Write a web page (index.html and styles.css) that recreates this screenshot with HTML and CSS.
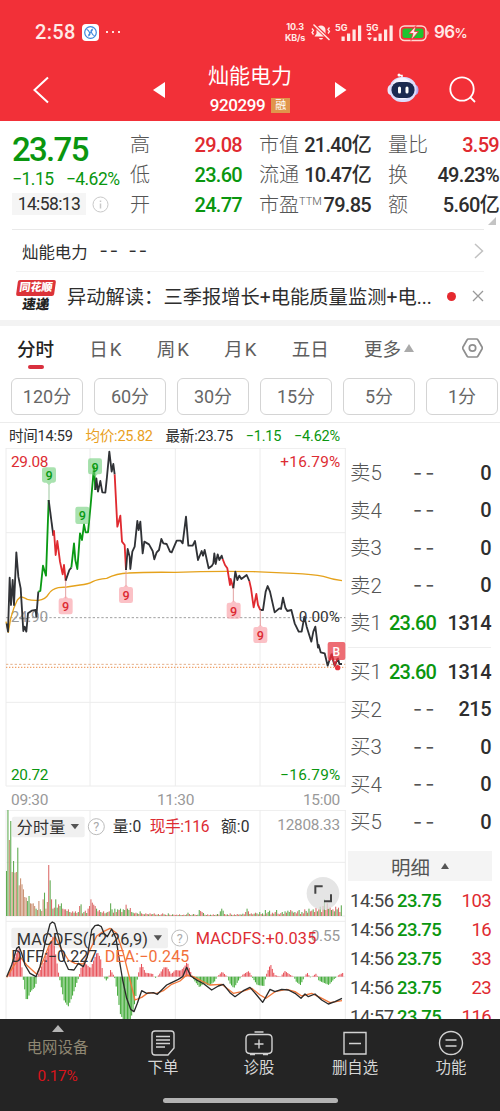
FILE: index.html
```html
<!DOCTYPE html>
<html lang="zh-CN">
<head>
<meta charset="UTF-8">
<meta name="viewport" content="width=device-width, initial-scale=1.0">
<title>灿能电力 920299</title>
<link rel="stylesheet" href="styles.css">
</head>
<body>

<header class="top">
    <div class="status">
        <span class="clock">2:58</span>
        <svg class="app-icon" width="17" height="17" viewBox="0 0 17 17"><rect width="17" height="17" rx="4" fill="#fff"/><circle cx="8.5" cy="8.5" r="5.8" fill="none" stroke="#3d86dc" stroke-width="1.2"/><path d="M4.5 5.5c2 0 2 1.500 3 3s.5 3-1.500 3.500M12.500 11.500c-2 0-2-1.500-3-3s-.5-3 1.500-3.500M10.500 6l-4 5" fill="none" stroke="#3d86dc" stroke-width="1.1"/></svg>
        <span class="dots"><i></i><i></i><i></i></span>
        <span class="speed">10.3<br>KB/s</span>
        <svg class="signals" width="120" height="20" viewBox="0 0 120 20" fill="#ffe9e6">
            <!-- muted bell -->
            <path d="M4.500 14.500l2-3V8c0-3 2-4.500 4.500-4.500s4.500 1.500 4.500 4.500v3.500l2 3zM9 16h4c-.5 2-3.500 2-4 0z"/>
            <path d="M3 2l17 16" stroke="#f23038" stroke-width="3.500"/>
            <path d="M3.500 2.500l16 15.500" stroke="#ffe9e6" stroke-width="1.500"/>
            <path d="M2 6.500l1.500 2L2 10.500l1.500 2M19.500 5.500L18 7.500l1.500 2L18 11.500" fill="none" stroke="#ffe9e6" stroke-width="1.300"/>
            <!-- sim 1 -->
            <text x="25" y="8.500" class="sig-text">5G</text>
            <path d="M31.500 14.500h3.200v4.500h-3.200zM37 11.500h3.200v7.500h-3.200zM42.500 7.500h3.200v11.500h-3.200zM48 3.500h3.200v15.500h-3.200z"/>
            <!-- sim 2 -->
            <text x="56" y="8.500" class="sig-text">5G</text>
            <path d="M57 13l2.500-3 2.500 3zM57 15.500l2.500 3 2.500-3zM63.500 15.500h3.200v3.500h-3.200zM68.500 11.500h3.200v7.500h-3.200zM74 7.500h3.200v11.500h-3.200zM79.500 3.500h3.200v15.500h-3.200z"/>
            <!-- battery -->
            <rect x="90" y="4" width="26" height="14.500" rx="4.500" fill="none" stroke="#ffd9d2" stroke-width="1.500"/>
            <rect x="92.500" y="6.500" width="21" height="9.500" rx="2.500" fill="#1ec32f"/>
            <path d="M117.500 8.500q2 2.500 0 5z"/>
            <path d="M106 3.500l-7 8h4l-2 7 7.500-9h-4z" stroke="#f23038" stroke-width=".8"/>
        </svg>
        <span class="battery">96<small>%</small></span>
    </div>
    <div class="titlebar">
        <svg class="back" width="16" height="28" viewBox="0 0 16 28"><path d="M15 1.500L1.500 14 15 26.500" fill="none" stroke="#fff" stroke-width="2"/></svg>
        <svg class="prev" width="12" height="16" viewBox="0 0 12 16"><path d="M12 0v16L0 8z" fill="#fff"/></svg>
        <div class="stock">
            <div class="stock-name">灿能电力</div>
            <div class="stock-code">920299<span class="rong">融</span></div>
        </div>
        <svg width="12" height="16" viewBox="0 0 12 16"><path d="M0 0v16l11.500-8z" fill="#fff"/></svg>
        <svg class="robot" width="32" height="30" viewBox="0 0 32 30">
            <path d="M15 5V2.500h-3" fill="none" stroke="#fff" stroke-width="1.500"/><circle cx="12" cy="2" r="1.500" fill="#fff"/>
            <ellipse cx="3.500" cy="17" rx="3" ry="5" fill="#e9eaff"/><ellipse cx="28.500" cy="17" rx="3" ry="5" fill="#b7a7ef"/>
            <rect x="2.500" y="4" width="27" height="25" rx="12" fill="#dcdcfb"/>
            <rect x="5" y="4.500" width="20" height="22" rx="10" fill="#f4f3ff"/>
            <rect x="4.500" y="9" width="23" height="16" rx="7.500" fill="#1b2950"/>
            <rect x="11" y="13.500" width="3" height="7" rx="1.500" fill="#fff"/><rect x="18.500" y="13.500" width="3" height="7" rx="1.500" fill="#fff"/>
        </svg>
        <svg class="search" width="28" height="28" viewBox="0 0 28 28" fill="none" stroke="#fff" stroke-width="1.800"><circle cx="13" cy="13" r="11.700"/><path d="M21 21l5 5"/></svg>
    </div>
</header>

<section class="quote">
    <div class="quote-main">
        <div class="price">23.75</div>
        <div class="change"><span>−1.15</span><span>−4.62%</span></div>
        <div class="stamp"><span class="time">14:58:13</span><svg width="17" height="17" viewBox="0 0 17 17" fill="none" stroke="#c9c9c9"><circle cx="8.500" cy="8.500" r="7.500"/><path d="M8.500 7.500v5M8.500 4.500v1.500" stroke-width="1.500"/></svg></div>
    </div>
    <div class="figures">
        <div><label>高</label><b class="red">29.08</b></div>
        <div><label>低</label><b class="green">23.60</b></div>
        <div><label>开</label><b class="green">24.77</b></div>
    </div>
    <div class="figures">
        <div><label>市值</label><b>21.40亿</b></div>
        <div><label>流通</label><b>10.47亿</b></div>
        <div><label>市盈<sup>TTM</sup></label><b>79.85</b></div>
    </div>
    <div class="figures">
        <div><label>量比</label><b class="red">3.59</b></div>
        <div><label>换</label><b>49.23%</b></div>
        <div><label>额</label><b>5.60亿</b></div>
    </div>
    <i class="corner"></i>
</section>

<section class="related">
    <span>灿能电力</span><span class="dash">--</span><span class="dash">--</span>
    <svg width="10" height="16" viewBox="0 0 10 16"><path d="M1 1l7.500 7L1 15" fill="none" stroke="#c2c2c2" stroke-width="1.500"/></svg>
</section>

<section class="news">
    <div class="news-logo"><span class="logo-top">同花顺</span><span class="logo-bottom">速递</span></div>
    <p>异动解读：三季报增长+电能质量监测+电...</p>
    <i class="dot"></i>
    <svg width="12" height="12" viewBox="0 0 12 12"><path d="M1 1l10 10M11 1L1 11" stroke="#999" stroke-width="1.300"/></svg>
</section>

<nav class="tabs">
    <span class="active">分时</span>
    <span class="k">日K</span>
    <span class="k">周K</span>
    <span class="k">月K</span>
    <span>五日</span>
    <span class="more">更多<i></i></span>
    <svg width="21" height="20" viewBox="0 0 21 20" fill="none" stroke="#8f8f8f" stroke-width="1.700"><path d="M6.500 1h8q1 0 1.500 1l4 7q.5 1 0 2l-4 7q-.5 1-1.500 1h-8q-1 0-1.500-1l-4-7q-.5-1 0-2l4-7q.5-1 1.500-1z"/><circle cx="10.500" cy="10" r="3.200"/></svg>
</nav>

<div class="periods">
    <span>120分</span><span>60分</span><span>30分</span><span>15分</span><span>5分</span><span>1分</span>
</div>

<main class="board">
    <div class="charts">
        <div class="summary">
            <span>时间14:59</span><span class="avg">均价:25.82</span><span>最新:23.75</span><span class="green">−1.15</span><span class="green">−4.62%</span>
        </div>

        <!-- price line, 3 units per pixel -->
        <svg class="price-chart" width="346" height="339" viewBox="0 9 1038 1017">
            <path class="grid" d="M18 10H1036M18 263H1036M18 772H1036M18 1023H1036M18 9V1023M270 9V1023M526 9V1023M780 9V1023M1036 9V1026"/>
            <path d="M18 518H1036" stroke="#a0a0a0" stroke-width="3" stroke-dasharray="7 6"/>
            <path d="M18 658H1036" stroke="#e5b08b" stroke-width="3" stroke-dasharray="7 6"/>
            <path d="M18 667H1036" stroke="#f0a269" stroke-width="4" stroke-dasharray="4 5"/>
            <text class="t-grey" x="32" y="531" font-size="46" textLength="112">24.90</text>
            <text class="t-dark" x="896" y="530" font-size="46" textLength="124">0.00%</text>
            <g class="line">
                <path class="average" d="M18 530L25 562L32 520L42 488L52 465L62 455Q74 458 82 463Q95 467 115 466Q137 463 145 448Q155 432 175 428L200 426L240 420Q265 418 278 410Q292 402 320 400Q350 385 385 384Q440 381 525 382Q640 378 760 380L880 385Q940 388 970 394Q1000 404 1026 407"/>
                <path d="M20 535L24 560L29 398L33 480L38 405L42 480L49 322L55 395L62 430L70 558L74 545L79 560L84 505L95 497L107 495L109 515L115 440"/>
                <path class="rise" d="M115 440L121 438L129 362L138 392L146 165"/>
                <path d="M146 165L160 272"/>
                <path class="fall" d="M160 272L162 258L167 330L172 288L180 350L188 388L192 360L197 407"/>
                <path d="M197 407L208 375L214 368"/>
                <path class="rise" d="M214 368L222 295L226 345L232 372L240 265L246 285L252 238L257 262L264 262L272 180L282 65L286 135"/>
                <path d="M286 135L289 100L294 140L301 108L307 142L316 143L321 95L328 20L335 80L340 57L344 88"/>
                <path class="fall" d="M344 88L352 245L361 212L366 290L374 300L378 375"/>
                <path d="M378 375L383 312L389 335L391 372L397 320L404 305L412 228L416 255L421 230L428 325L433 290L447 298L458 318L463 343L470 322L477 315L484 282L490 295L500 297L510 320L515 322L530 287L542 287L548 295L558 215L565 302L578 302L585 288L594 345L605 318L609 332L614 315L626 370L636 362L640 355L643 325L647 357L653 328L658 345L665 332L668 342"/>
                <path class="fall" d="M668 342L675 360L682 370L690 420L692 402L700 430"/>
                <path d="M700 430L706 380L712 405L718 392L724 402L740 390L748 408"/>
                <path class="fall" d="M748 408L753 430L761 487L769 447L774 480L781 495"/>
                <path d="M781 495L789 495L797 440L803 423L810 440L824 502L838 490L843 492L849 458L856 488L862 498L874 495L884 535L896 560L905 560L913 515L920 545L934 590L940 560L946 545L954 608L956 600L962 622L974 625L983 662L994 628L1004 662L1014 640L1018 657L1026 657"/>
            </g>
            <!-- nine-turn marks -->
            <path stroke="#9cc79f" stroke-width="3" d="M147 118V165"/>
            <path stroke="#e3a0a0" stroke-width="3" d="M197 408V460M378 376V425M700 430V470M781 496V543"/>
            <g class="mark up">
                <path d="M133 67h28q7 0 7 7v32q0 7-7 7h-6l-8 7-8-7h-6q-7 0-7-7V74q0-7 7-7z"/><text x="147" y="105">9</text>
                <path d="M233 185h28q7 0 7 7v38q0 7-7 7h-28q-7 0-7-7v-38q0-7 7-7z"/><text x="247" y="226">9</text>
                <path d="M271 40h28q7 0 7 7v34q0 7-7 7h-6l-8 7-8-7h-6q-7 0-7-7V47q0-7 7-7z"/><text x="285" y="80">9</text>
            </g>
            <g class="mark down">
                <path d="M183 460h6l8-7 8 7h6q7 0 7 7v34q0 7-7 7h-28q-7 0-7-7v-34q0-7 7-7z"/><text x="197" y="499">9</text>
                <path d="M364 426h6l8-7 8 7h6q7 0 7 7v34q0 7-7 7h-28q-7 0-7-7v-34q0-7 7-7z"/><text x="378" y="466">9</text>
                <path d="M687 473h6l8-7 8 7h6q7 0 7 7v34q0 7-7 7h-28q-7 0-7-7v-34q0-7 7-7z"/><text x="701" y="513">9</text>
                <path d="M767 546h6l8-7 8 7h6q7 0 7 7v34q0 7-7 7h-28q-7 0-7-7v-34q0-7 7-7z"/><text x="781" y="586">9</text>
            </g>
            <rect x="983" y="591" width="53" height="54" rx="6" fill="#e8444d" fill-opacity=".78"/>
            <text x="1009" y="632" font-size="36" font-weight="500" text-anchor="middle" fill="#fff">B</text>
            <path d="M988 648L996 630L1004 660L1013 640" fill="none" stroke="#d02a35" stroke-width="5"/>
            <circle cx="1013" cy="668" r="8" fill="#e5323c"/>
            <text class="t-red" x="33" y="67" font-size="46" textLength="112">29.08</text>
            <text class="t-red" x="841" y="67" font-size="46" textLength="180">+16.79%</text>
            <text class="t-green" x="33" y="1004" font-size="46" textLength="112">20.72</text>
            <text class="t-green" x="841" y="1004" font-size="46" textLength="180">−16.79%</text>
        </svg>

        <div class="axis"><span>09:30</span><span>11:30</span><span>15:00</span></div>

        <!-- volume and macd, 3 units per pixel -->
        <svg class="sub-chart" width="346" height="209" viewBox="0 90 1038 627">
            <path class="grid" d="M18 91H1036M18 247H1036M18 408H1036M18 424H1036M18 590H1036M18 90V717M270 90V717M526 90V717M780 90V717M1036 90V717"/>
            <rect x="36" y="110" width="218" height="62" rx="6" fill="#f0f0f0"/>
            <rect x="34" y="443" width="470" height="62" rx="6" fill="#f0f0f0"/>
            <g id="volume"></g>
            <g id="macd"></g>
            <path class="macd-line" stroke="#f2773a" d="M20 592L40 560L60 530L80 555L110 583L130 540L150 490L165 470L180 500L205 540L225 550L250 552L270 510L290 468L310 455L330 445L350 460L370 520L390 600L405 660L425 652L445 638L470 640L490 632L515 613L540 603L560 585L580 590L605 603L630 615L665 613L700 640L725 635L755 625L780 645L798 655L825 635L860 628L885 635L905 648L935 640L960 652L990 668L1026 662"/>
            <path class="macd-line" stroke="#2b2b2b" d="M20 590L35 555L50 505L57 500L65 520L75 555L90 580L108 590L120 560L135 490L150 432L157 426L164 430L175 470L190 535L205 568L222 570L235 550L250 560L262 530L275 450L285 437L295 435L304 440L312 460L322 470L335 447L348 475L358 540L368 600L380 655L392 688L402 695L412 670L425 632L440 640L460 638L472 643L485 630L500 615L510 610L535 598L548 590L560 562L572 588L590 600L612 612L635 630L655 618L670 613L690 638L705 650L730 632L750 622L770 645L788 667L798 650L810 628L825 635L845 628L865 630L885 640L903 655L915 642L925 650L945 642L965 660L985 672L1005 665L1026 655"/>
            <text class="t-dark" x="50" y="159" font-size="48" textLength="146">分时量</text>
            <path d="M212 132h25l-12 16z" fill="#555"/>
            <text class="t-dark" x="338" y="157" font-size="47" textLength="86">量:0</text>
            <text class="t-red" x="449" y="157" font-size="47" textLength="180">现手:116</text>
            <text class="t-dark" x="663" y="157" font-size="47" textLength="86">额:0</text>
            <text class="t-grey" x="832" y="149" font-size="46" textLength="188">12808.33</text>
            <text class="t-dark" x="50" y="494" font-size="49" textLength="394">MACDFS(12,26,9)</text>
            <path d="M461 466h25l-12 16z" fill="#555"/>
            <text class="t-grey" x="932" y="484" font-size="46" textLength="88">0.55</text>
            <text class="t-red" x="587" y="491" font-size="49" textLength="362">MACDFS:+0.035</text>
            <text class="t-dark" x="34" y="546" font-size="48" textLength="258">DIFF:−0.227</text>
            <text class="t-orange" x="314" y="546" font-size="48" textLength="254">DEA:−0.245</text>
            <g class="help"><circle cx="289" cy="140" r="24"/><text x="289" y="154">?</text><circle cx="539" cy="474" r="24"/><text x="539" y="488">?</text></g>
            <circle cx="969" cy="340" r="49" fill="#dcdcdc" fill-opacity=".75"/>
            <path d="M946 341V319H968M972 364H993V343" fill="none" stroke="#444" stroke-width="6"/>
        </svg>
    </div>

    <aside class="book">
        <div class="orders">
            <div><label>卖5</label><span>--</span><b>0</b></div>
            <div><label>卖4</label><span>--</span><b>0</b></div>
            <div><label>卖3</label><span>--</span><b>0</b></div>
            <div><label>卖2</label><span>--</span><b>0</b></div>
            <div><label>卖1</label><span class="green">23.60</span><b>1314</b></div>
        </div>
        <div class="orders buy">
            <div><label>买1</label><span class="green">23.60</span><b>1314</b></div>
            <div><label>买2</label><span>--</span><b>215</b></div>
            <div><label>买3</label><span>--</span><b>0</b></div>
            <div><label>买4</label><span>--</span><b>0</b></div>
            <div><label>买5</label><span>--</span><b>0</b></div>
        </div>
        <div class="detail">明细<i></i></div>
        <div class="trades">
            <div><span>14:56</span><span class="green">23.75</span><span class="red">103</span></div>
            <div><span>14:56</span><span class="green">23.75</span><span class="red">16</span></div>
            <div><span>14:56</span><span class="green">23.75</span><span class="red">33</span></div>
            <div><span>14:56</span><span class="green">23.75</span><span class="red">23</span></div>
            <div><span>14:57</span><span class="green">23.75</span><span class="red">116</span></div>
        </div>
    </aside>
</main>

<footer class="bottom">
    <div class="items">
        <div class="sector"><i></i><span>电网设备</span><em>0.17%</em></div>
        <div><svg width="24" height="26" viewBox="0 0 24 26"><path d="M4 1h16q3 0 3 3v14l-6 7H4q-3 0-3-3V4q0-3 3-3zM5 6.500h14M5 10h14M5 13.500h14M5 17h9"/></svg><span>下单</span></div>
        <div><svg width="28" height="26" viewBox="0 0 28 26"><path d="M9.500 2h9M5 4.500h18q4 0 4 4v11q0 4-4 4H5q-4 0-4-4v-11q0-4 4-4zM14 9.500v9M9.500 14h9M5 24.500h5M18 24.500h5"/></svg><span>诊股</span></div>
        <div><svg width="24" height="26" viewBox="0 0 24 26"><path d="M1 2.500h22v21.500H1zM6 13.500h12"/></svg><span>删自选</span></div>
        <div><svg width="26" height="26" viewBox="0 0 26 26"><circle cx="13" cy="13" r="11.500"/><path d="M7.500 10h11M7.500 16h11"/></svg><span>功能</span></div>
    </div>
    <div class="home"></div>
</footer>

<script src="chart.js"></script>
</body>
</html>
```
FILE: styles.css
```css
* {
    box-sizing: border-box;
}
body {
    margin: 0;
    width: 500px;
    height: 1111px;
    overflow: hidden;
    background: #fff;
    color: #2e2e2e;
    font-family: Roboto, "Noto Sans CJK SC", sans-serif;
}
svg {
    display: block;
    flex: none;
}
b {
    font-weight: 500;
}
i, em {
    font-style: normal;
}
.red { color: #e02a30 !important; }
.green { color: #0a960f !important; }

/* header */
.top {
    height: 121px;
    background: #f23038;
    color: #fff;
}
.status {
    display: flex;
    align-items: center;
    height: 58px;
    padding: 6px 0 0 35px;
    color: #ffe9e6;
}
.clock {
    width: 40px;
    font-size: 20px;
    font-weight: 500;
    letter-spacing: 0.3px;
}
.app-icon {
    margin-left: 7px;
}
.dots {
    display: flex;
    gap: 4px;
    margin-left: 7px;
}
.dots i {
    width: 2px;
    height: 2px;
    background: #ffe0dc;
}
.speed {
    width: 22px;
    margin-left: 164px;
    font: 700 9px/11px Inter, sans-serif;
    text-align: center;
    white-space: nowrap;
    letter-spacing: -0.2px;
}
.signals {
    margin: -1px 0 0 4px;
}
.sig-text {
    font: 700 9px Inter, sans-serif;
}
.battery {
    margin-left: 4px;
    font: 600 17px Inter, sans-serif;
    letter-spacing: -0.6px;
}
.battery small {
    font-size: 13px;
}
.titlebar {
    display: flex;
    align-items: center;
    height: 63px;
    padding-left: 33px;
}
.prev {
    margin-left: 104px;
}
.stock {
    width: 170px;
    text-align: center;
}
.stock-name {
    height: 29px;
    font-size: 21px;
    line-height: 30px;
}
.stock-code {
    display: flex;
    justify-content: center;
    align-items: center;
    gap: 6px;
    height: 26px;
    margin-top: 2px;
    font-size: 17px;
    font-weight: 500;
    letter-spacing: -0.4px;
}
.rong {
    width: 19px;
    height: 15px;
    background: #e0954c;
    font-size: 11px;
    line-height: 15px;
    letter-spacing: 0;
    font-weight: 400;
}
.robot {
    margin-left: 40px;
    margin-top: -4px;
}
.search {
    margin-left: 30px;
}

/* quote */
.quote {
    position: relative;
    display: flex;
    height: 108px;
    padding-top: 8px;
}
.quote-main {
    width: 130px;
    padding-left: 12px;
    color: #0a960f;
}
.price {
    height: 40px;
    font-size: 33px;
    line-height: 42px;
    font-weight: 500;
    letter-spacing: -1.7px;
}
.change {
    display: flex;
    gap: 12px;
    height: 20px;
    font-size: 17.5px;
    line-height: 20px;
    letter-spacing: -0.5px;
    white-space: nowrap;
}
.stamp {
    display: flex;
    align-items: center;
    gap: 6px;
    height: 22px;
    margin-top: 4px;
}
.time {
    width: 74px;
    height: 22px;
    background: #f5f5f5;
    color: #2e2e2e;
    font-size: 17.5px;
    line-height: 22px;
    text-align: center;
    letter-spacing: -0.6px;
}
.figures {
    width: 112px;
    margin: 1px 17px 0 0;
}
.figures:last-of-type {
    width: 111px;
    margin-right: 0;
}
.figures div {
    display: flex;
    justify-content: space-between;
    height: 30px;
    line-height: 31px;
    font-size: 20px;
    white-space: nowrap;
}
.figures label {
    color: #555;
    font-weight: 300;
}
.figures b {
    letter-spacing: -0.7px;
}
.figures sup {
    font-size: 11px;
    line-height: 0;
    vertical-align: 7px;
}
.corner {
    position: absolute;
    right: 4px;
    bottom: 4px;
    border-left: 8px solid transparent;
    border-bottom: 8px solid #c4c4c4;
}

/* related stock + news */
.related {
    display: flex;
    align-items: center;
    height: 42px;
    margin: 0 16px 0 12px;
    padding-left: 10px;
    border-top: 1px solid #e9e9e9;
    font-size: 16.4px;
}
.dash {
    width: 21px;
    margin-left: 12px;
    font-family: Inter, sans-serif;
    font-size: 18px;
    letter-spacing: 2px;
}
.dash + .dash {
    margin-left: 8px;
}
.related svg {
    margin-left: auto;
}
.news {
    display: flex;
    align-items: center;
    height: 49px;
    margin: 0 16px;
    border-top: 1px solid #f3f3f3;
}
.news-logo {
    width: 38px;
    height: 32px;
    margin-left: 1px;
    text-align: center;
    font-weight: 900;
}
.logo-top, .logo-bottom {
    display: block;
    height: 16px;
    transform: skewX(-8deg);
    white-space: nowrap;
}
.logo-top {
    background: #dc3338;
    border-radius: 2px;
    color: #fff;
    font-size: 11px;
    line-height: 15px;
}
.logo-bottom {
    font-size: 13.5px;
    line-height: 17px;
    color: #222;
}
.news p {
    width: 368px;
    margin: 0 0 0 12px;
    font-size: 19.3px;
    white-space: nowrap;
}
.dot {
    width: 9px;
    height: 9px;
    margin-left: 12px;
    border-radius: 50%;
    background: #e5292f;
}
.news svg {
    margin-left: 16px;
}

/* tabs */
.tabs {
    display: flex;
    align-items: center;
    gap: 35px;
    height: 58px;
    padding: 0 17px 9px;
    border-top: 6px solid #f3f3f3;
    color: #5e5e5e;
    font-size: 18.6px;
}
.tabs span {
    position: relative;
    white-space: nowrap;
}
.tabs .k {
    width: 32.5px;
    letter-spacing: 2px;
}
.tabs .active {
    color: #222;
    font-weight: 500;
}
.active::after {
    content: "";
    position: absolute;
    left: 11px;
    bottom: -8px;
    width: 16px;
    height: 4px;
    border-radius: 2px;
    background: #d9303e;
}
.more {
    display: flex;
    align-items: center;
    gap: 3px;
}
.more i {
    border: 5px solid transparent;
    border-top: 0;
    border-bottom: 8px solid #aaa;
}
.tabs svg {
    margin-left: auto;
}
.periods {
    display: flex;
    gap: 11px;
    height: 45px;
    padding-left: 11px;
    border-bottom: 1px solid #ececec;
}
.periods span {
    flex: none;
    width: 72px;
    height: 37px;
    border: 1px solid #d4d4d4;
    border-radius: 6px;
    color: #666;
    font-size: 18px;
    line-height: 35px;
    text-align: center;
}

/* charts */
.board {
    display: flex;
    height: 596px;
    overflow: hidden;
}
.charts {
    width: 346px;
    height: 596px;
}
.summary {
    display: flex;
    justify-content: space-between;
    height: 25px;
    padding: 0 6px 0 9px;
    font-size: 14.5px;
    line-height: 27px;
    letter-spacing: -0.2px;
    white-space: nowrap;
}
.avg {
    color: #e9a023;
}
.grid {
    fill: none;
    stroke: #ececec;
    stroke-width: 3;
}
.line path {
    fill: none;
    stroke: #303236;
    stroke-width: 5.5;
    stroke-linejoin: round;
}
.line .rise { stroke: #0a9a14; }
.line .fall { stroke: #e02a30; }
.line .average { stroke: #e5a21c; stroke-width: 4; }
.mark text {
    font-size: 38px;
    font-weight: 500;
    text-anchor: middle;
}
.mark.up path { fill: rgba(112, 207, 122, 0.6); }
.mark.up text { fill: #0a9a14; }
.mark.down path { fill: rgba(249, 160, 168, 0.65); }
.mark.down text { fill: #dd2a33; }
.t-grey { fill: #999; }
.t-dark { fill: #333; }
.t-red { fill: #dd2c33; }
.t-green { fill: #0a960f; }
.t-orange { fill: #f2703a; }
.axis {
    display: flex;
    justify-content: space-between;
    height: 23px;
    padding: 0 6px 0 11px;
    color: #999;
    font-size: 15.5px;
    line-height: 26px;
    letter-spacing: -0.3px;
}
.macd-line {
    fill: none;
    stroke-width: 4;
    stroke-linejoin: round;
}
.help circle {
    fill: #fff;
    stroke: #bbb;
    stroke-width: 3;
}
.help text {
    fill: #aaa;
    font-size: 38px;
    text-anchor: middle;
}

/* order book */
.book {
    width: 154px;
    padding: 31px 9px 0 2px;
}
.orders {
    padding-left: 2px;
    height: 193px;
}
.orders div {
    display: flex;
    align-items: center;
    height: 37.5px;
    font-size: 20px;
    white-space: nowrap;
}
.orders label {
    width: 39px;
    margin-top: -3px;
    color: #555;
    font-weight: 300;
    font-size: 20.5px;
}
.orders span {
    width: 46px;
    padding-left: 24px;
    color: #555;
    font-family: Inter, sans-serif;
    letter-spacing: 3px;
}
.orders .green {
    padding-left: 0;
    font-family: Roboto, sans-serif;
    font-weight: 500;
    letter-spacing: -0.8px;
}
.orders b {
    margin-left: auto;
    letter-spacing: -0.5px;
}
.buy {
    height: 204px;
    padding-top: 5px;
    border-top: 1px solid #eee;
}
.detail {
    display: flex;
    justify-content: center;
    align-items: center;
    gap: 11px;
    width: 144px;
    height: 30px;
    background: #f4f4f4;
    color: #555;
    font-size: 19.5px;
}
.detail i {
    border: 4px solid transparent;
    border-top: 0;
    border-bottom: 6px solid #555;
}
.trades {
    padding: 5px 0 0 2px;
}
.trades div {
    display: flex;
    height: 28.9px;
    font-size: 18.5px;
    line-height: 30px;
    letter-spacing: -0.6px;
    font-weight: 500;
}
.trades span {
    width: 48px;
}
.trades span:first-child {
    font-weight: 400;
    letter-spacing: -0.5px;
    color: #444;
}
.trades .red {
    margin-left: auto;
    text-align: right;
    font-weight: 400;
}

/* bottom bar */
.bottom {
    height: 92px;
    background: #242424;
    color: #d6d6d6;
}
.items {
    display: flex;
    height: 79px;
}
.items div {
    display: flex;
    flex-direction: column;
    align-items: center;
    width: 96px;
    padding-top: 11px;
    font-size: 15.4px;
    line-height: 25px;
}
.items svg {
    fill: none;
    stroke: #d2d2d2;
    stroke-width: 1.4;
}
.items .sector {
    width: 115px;
    padding-top: 6px;
    color: #8f8772;
}
.sector i {
    border: 6px solid transparent;
    border-top: 0;
    border-bottom: 7px solid #b5b5b5;
}
.sector span {
    margin-top: 4px;
}
.sector em {
    margin-top: 3px;
    color: #d9141c;
    letter-spacing: -0.3px;
}
.home {
    width: 175px;
    height: 5px;
    margin: 0 auto;
    border-radius: 3px;
    background: #b3b3b3;
}
```
FILE: chart.js
```javascript
var NS = "http://www.w3.org/2000/svg";
var STEP = 4.22; // one minute

function bar(group, x, y, h, color) {
    var r = document.createElementNS(NS, "rect");
    r.setAttribute("x", x);
    r.setAttribute("y", y);
    r.setAttribute("width", 3.2);
    r.setAttribute("height", h);
    r.setAttribute("fill", color);
    group.appendChild(r);
}

// volume: negative = falling minute
var volume = [-135, -318, 228, -285, 132, -165, 130, 132, -205, 92, 113, 95, 80, 57, 55, -45, -60, 38, 37, 38,
    30, -22, 18, 45, -20, 15, 50, -70, 22, 42, 153, -107, 50, -22, 25, -50, -25, 35, -30, -38,
    22, 20, 20, -15, 20, -12, 10, 14, -10, 14, 9, -12, 30, -35, 8, -12, 16, -9, 22, 30,
    50, 40, 34, 30, -22, 14, 18, -12, 10, 14, -8, 10, -12, 14, -38, -20, 10, -22, 12, -20,
    18, -22, 12, -20, -18, 34, -22, -18, 24, -12, -10, 8, 10, -8, 6, -14, 8, 6, -5, 8,
    6, -5, 8, 5, -6, 8, 4, -4, 6, -3, 5, 8, -5, 4, 3, -8, 4, 3, -5, 4,
    3, 4, -3, 5, -3, 3, 4, -3, 5, -10, 6, -3, 4, -6, 4, 3, -4, -18, 15, 12,
    -9, 4, -3, 5, 3, -4, 3, 5, -3, 4, -6, 4, -14, -22, -16, 6, 4, -5, 3, 8,
    -4, 3, 5, -3, 6, 4, -5, 4, -7, 5, 12, -22, 14, -6, 8, 5, -7, 10, -8, 5,
    -12, 6, -8, 4, -18, 8, -12, -16, 5, 10, -7, 12, -18, 7, 5, 9, -12, 6, -14, 10,
    -16, -12, 18, -14, 10, -12, 8, 14, -18, 6, -12, 8, 20, -15, 10, -22, 14, 16, -20, 12,
    24, -14, 20, -28, 12, 30, -50, 18, 38, -22, 26, -18, 20, -14, 28, -20, 25, 12, -32];

var volumeGroup = document.getElementById("volume");
volume.forEach(function (v, i) {
    var h = Math.abs(v);
    var color = v < 0 ? "#5fab51" : (i < 30 ? "#c98f70" : "#dc6b69");
    bar(volumeGroup, 18 + i * STEP, 408 - h, h, color);
});

// macd histogram outline as [x, value]
var macd = [[22, 0], [30, 25], [55, 90], [64, 30], [67, 0], [70, -20], [78, -75], [90, -45], [105, -30], [110, 0],
    [115, 10], [135, 60], [157, 120], [165, 70], [175, 5], [180, -20], [190, -70], [203, -90], [215, -60], [230, -15],
    [236, 0], [240, 25], [255, 40], [270, 25], [290, 75], [300, 55], [309, 0], [318, -12], [325, 0], [330, 20],
    [342, 0], [347, -30], [360, -115], [370, -130], [390, -130], [405, -70], [411, 0], [415, 15], [422, 40], [435, 12],
    [458, 8], [463, -5], [475, 5], [490, 28], [500, 28], [512, 8], [525, 20], [540, 18], [552, 30], [560, 45],
    [572, 10], [580, -10], [597, -32], [610, -20], [625, -27], [642, -15], [650, 0], [665, 15], [680, 0], [688, -20],
    [700, -35], [715, -10], [725, 5], [745, 17], [757, -5], [770, -25], [790, -28], [797, 5], [810, 38], [822, 5],
    [840, 0], [853, 17], [870, 5], [880, 0], [887, -15], [900, -25], [912, 0], [920, 12], [930, -3], [948, 10],
    [955, -12], [985, -25], [1000, -8], [1015, 5], [1028, 12]];

var macdGroup = document.getElementById("macd");
var k = 0;
for (var x = 22; x < 1028; x += STEP) {
    while (macd[k + 1][0] < x) k++;
    var a = macd[k], b = macd[k + 1];
    var v = a[1] + (b[1] - a[1]) * (x - a[0]) / (b[0] - a[0]);
    bar(macdGroup, x, v > 0 ? 590 - v : 590, Math.abs(v), v > 0 ? "#e8525a" : "#45ac3b");
}
```
